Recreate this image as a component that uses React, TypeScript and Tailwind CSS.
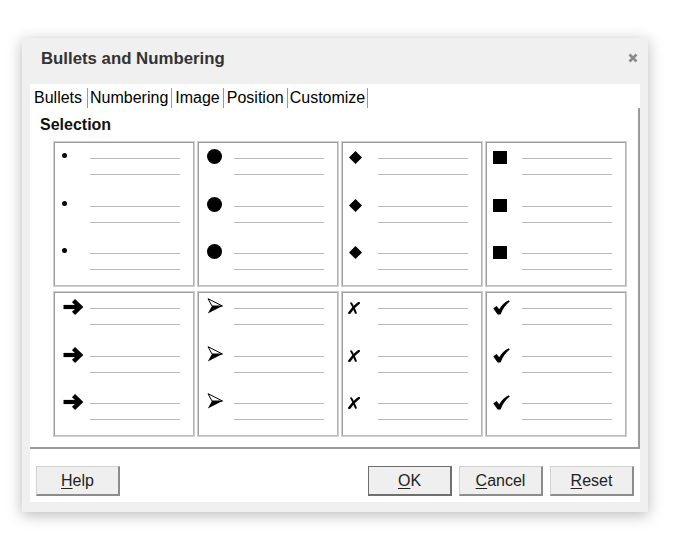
import React from "react";

const Dot = () => <div className="ml-[7px] mt-[4px] h-[5px] w-[5px] rounded-full bg-black" />;
const Circle = () => <div className="ml-[8px] mt-[0px] h-[15px] w-[15px] rounded-full bg-black" />;
const Diamond = () => (
  <svg className="ml-[6px] mt-[2px] block" width="13" height="13" viewBox="0 0 13 13">
    <polygon points="6.5,0 13,6.5 6.5,13 0,6.5" fill="#000" />
  </svg>
);
const Square = () => <div className="ml-[6px] mt-[2px] h-[13px] w-[14px] bg-black" />;
const Arrow = () => (
  <svg className="ml-[8px] mt-[0px] block" width="22" height="16" viewBox="0 0 22 16">
    <path d="M0.5 8 H16" stroke="#000" strokeWidth="4.2" fill="none" />
    <path d="M10.5 1.6 L17.2 8 L10.5 14.4" stroke="#000" strokeWidth="4.4" fill="none" strokeLinejoin="miter" strokeMiterlimit="4" />
  </svg>
);
const ArrowHead = () => (
  <svg className="ml-[8px] -mt-px block" width="16" height="16" viewBox="0 0 16 16">
    <polygon points="5,8 15.5,8 0.8,15.6" fill="#000" />
    <polygon points="1,0.7 15.5,8 5,8" fill="#fff" stroke="#000" strokeWidth="1" strokeLinejoin="miter" />
  </svg>
);
const Ballot = () => (
  <svg className="ml-[5px] mt-[3px] block" width="12" height="12" viewBox="0 0 12 12">
    <path d="M1.3 11 C4 7.2 7 3.6 10.8 1" stroke="#000" strokeWidth="2.4" fill="none" strokeLinecap="round" />
    <path d="M3.2 1.3 C5 4 6.4 7.5 7.8 10.8" stroke="#000" strokeWidth="2" fill="none" strokeLinecap="round" />
  </svg>
);
const Check = () => (
  <svg className="ml-[6px] mt-[1px] block" width="17" height="15" viewBox="0 0 17 15">
    <path
      d="M0.3 8.4 L3.6 6 L6.2 9.2 C8.8 4.8 12 1.8 15.8 0.2 L16.8 1.6 C12.8 4.6 9.6 9 7.6 14.4 L4.6 14.4 Z"
      fill="#000"
    />
  </svg>
);

function Cell({ bullet }: { bullet: React.ReactNode }) {
  const heights = ["h-[48px]", "h-[47px]", "h-[47px]"];
  return (
    <div className="h-[146px] w-[142px] border border-[#d0d0d0] bg-white">
      <div className="h-full w-full border border-[#9c9c9c] border-b-[#bdbdbd] border-r-[#b0b0b0] bg-white pt-[6px]">
        {heights.map((h, i) => (
          <div key={i} className={`flex ${h}`}>
            <div className="w-[35px]">{bullet}</div>
            <div className="w-[90px]">
              <div className="mt-[9px] h-px bg-[#b9b9b9]" />
              <div className="mt-[15px] h-px bg-[#b9b9b9]" />
            </div>
          </div>
        ))}
      </div>
    </div>
  );
}

function Btn({ first, rest, def }: { first: string; rest: string; def?: boolean }) {
  return (
    <button
      className={
        "h-[30px] w-[84px] bg-[#efefef] text-[16px] text-[#222] " +
        (def
          ? "border border-[#6e6e6e] border-b-2 border-r-2"
          : "border border-t-[#d0d0d0] border-l-[#d0d0d0] border-b-2 border-r-2 border-b-[#8c8c8c] border-r-[#8c8c8c]")
      }
    >
      <span className="underline underline-offset-2">{first}</span>
      {rest}
    </button>
  );
}

export default function App() {
  const bullets = [
    <Dot />,
    <Circle />,
    <Diamond />,
    <Square />,
    <Arrow />,
    <ArrowHead />,
    <Ballot />,
    <Check />,
  ];
  return (
    <div
      className="h-[551px] w-[673px] bg-white pl-[22px] pt-[38px]"
      style={{ fontFamily: '"Liberation Sans", Arial, sans-serif' }}
    >
      <div className="flex h-[474px] w-[626px] flex-col bg-[#f0f0f0] shadow-[0_3px_14px_rgba(0,0,0,0.28)]">
        <div className="flex h-[46px] items-center justify-between pb-[5px] pl-[19px] pr-[10px]">
          <div className="text-[16.8px] font-bold text-[#333]">Bullets and Numbering</div>
          <svg width="10" height="10" viewBox="0 0 10 10" className="mt-[-2px]">
            <path d="M1.5 1.5 L8.5 8.5 M8.5 1.5 L1.5 8.5" stroke="#8a8a8a" strokeWidth="2.6" />
          </svg>
        </div>
        <div className="mx-[8px] flex h-[418px] flex-col bg-white">
          <div className="flex h-[24px] items-stretch pt-[4px] text-[16px] text-black">
            <div className="flex items-center border-r border-[#9a9a9a] pl-[4px] pr-[5px]">Bullets</div>
            <div className="flex items-center border-r border-[#9a9a9a] pl-[2px] pr-[3px]">Numbering</div>
            <div className="flex items-center border-r border-[#9a9a9a] px-[3px]">Image</div>
            <div className="flex items-center border-r border-[#9a9a9a] px-[3px]">Position</div>
            <div className="flex items-center border-r border-[#9a9a9a] px-[2px]">Customize</div>
          </div>
          <div className="h-[341px] w-[610px] border-b-2 border-r-2 border-[#9a9a9a] pt-[7px]">
            <div className="h-[20px] pl-[10px] text-[16px] font-bold leading-[20px] text-[#111]">Selection</div>
            <div className="ml-[23px] mt-[6px] grid grid-cols-[142px_142px_142px_142px] gap-x-[2px] gap-y-[4px]">
              {bullets.map((b, i) => (
                <Cell key={i} bullet={b} />
              ))}
            </div>
          </div>
          <div className="flex items-start justify-between px-[6px] pt-[17px]">
            <Btn first="H" rest="elp" />
            <div className="flex gap-[7px]">
              <Btn first="O" rest="K" def />
              <Btn first="C" rest="ancel" />
              <Btn first="R" rest="eset" />
            </div>
          </div>
        </div>
      </div>
    </div>
  );
}
